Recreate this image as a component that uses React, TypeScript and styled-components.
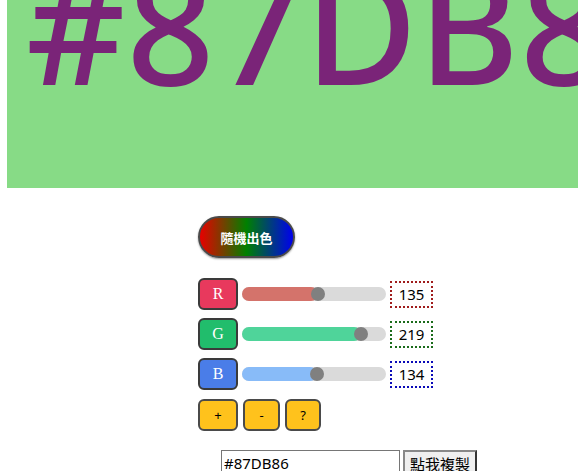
import * as React from 'react';
import styled, { createGlobalStyle } from 'styled-components';

const GlobalStyle = createGlobalStyle`
  html, body {
    margin: 0;
    padding: 0;
    background: #fff;
    overflow: hidden;
    font-family: "Noto Sans", "Noto Sans CJK TC", sans-serif;
  }
`;

interface Channel {
  key: string
  value: number
  btn: string
  fill: string
  frame: string
}

const Page = styled.div`
  padding-left: 7px;
`;

const Swatch = styled.div`
  height: 188px;
  overflow: hidden;
`;

const Hex = styled.h1`
  margin: 0;
  padding-left: 19px;
  font-family: "Noto Sans", sans-serif;
  font-weight: 500;
  font-size: 154px;
  line-height: 50px;
  letter-spacing: 1px;
  white-space: nowrap;
`;

const Panel = styled.div`
  display: flex;
  flex-direction: column;
  align-items: flex-start;
  padding: 28px 0 0 191px;
`;

const RandomButton = styled.button`
  width: 97px;
  height: 42px;
  border: 2px solid #4a4a4a;
  border-radius: 21px;
  background: linear-gradient(90deg, #e80000 0%, #008000 50%, #0000ee 100%);
  color: #fff;
  font-family: "Noto Sans CJK TC", sans-serif;
  font-weight: 700;
  font-size: 13px;
  box-shadow: 0 1px 2px rgba(0, 0, 0, .4);
  margin-bottom: 20px;
`;

const Row = styled.div`
  display: flex;
  align-items: center;
  gap: 4px;
  margin-bottom: 8px;
`;

const KeyButton = styled.button<{ $bg: string }>`
  width: 40px;
  height: 32px;
  border: 2px solid #3a3a3a;
  border-radius: 6px;
  background: ${p => p.$bg};
  color: #fff;
  font-family: "Liberation Serif", serif;
  font-size: 16px;
  padding: 0;
`;

const Track = styled.div`
  position: relative;
  width: 144px;
  height: 14px;
  border-radius: 7px;
  background: #dadada;
`;

const Fill = styled.div<{ $color: string }>`
  height: 100%;
  border-radius: 7px;
  background: ${p => p.$color};
`;

const Thumb = styled.div`
  position: absolute;
  top: 0;
  width: 14px;
  height: 14px;
  border-radius: 50%;
  background: #808080;
`;

const Value = styled.div<{ $frame: string }>`
  width: 43px;
  height: 27px;
  box-sizing: border-box;
  border: 2px dotted ${p => p.$frame};
  display: flex;
  align-items: center;
  justify-content: center;
  font-size: 15px;
  color: #000;
`;

const Tools = styled.div`
  display: flex;
  gap: 5px;
  margin-top: 1px;
  margin-bottom: 19px;
`;

const ToolButton = styled.button<{ $w: number }>`
  width: ${p => p.$w}px;
  height: 32px;
  border: 2px solid #4a4a4a;
  border-radius: 6px;
  background: #ffc21c;
  color: #000;
  font-size: 13px;
  font-family: "Noto Sans", sans-serif;
  padding: 0;
`;

const CopyRow = styled.div`
  display: flex;
  gap: 3px;
  margin-left: 23px;
`;

const HexInput = styled.input`
  width: 179px;
  height: 26px;
  box-sizing: border-box;
  border: 1px solid #767676;
  padding: 0 2px;
  font-family: "Noto Sans", sans-serif;
  font-size: 15px;
  color: #000;
`;

const CopyButton = styled.button`
  height: 26px;
  padding: 0 5px;
  border: 2px outset #888;
  background: #efefef;
  font-family: "Noto Sans CJK TC", sans-serif;
  font-size: 15px;
  color: #000;
`;

const channels: Channel[] = [
  { key: 'R', value: 135, btn: '#e8395d', fill: '#d4736b', frame: '#a01c1c' },
  { key: 'G', value: 219, btn: '#21bd6c', fill: '#4fd49a', frame: '#1a6b1a' },
  { key: 'B', value: 134, btn: '#4a7de8', fill: '#88bbf8', frame: '#0a0ab8' },
];

const toHex = (n: number) => n.toString(16).toUpperCase().padStart(2, '0');

export default function App() {
  const hex = '#' + channels.map(c => toHex(c.value)).join('');
  return (
    <Page>
      <GlobalStyle />
      <Swatch style={{ background: hex }}>
        <Hex style={{ color: '#7a2478' }}>{hex}</Hex>
      </Swatch>
      <Panel>
        <RandomButton>隨機出色</RandomButton>
        {channels.map(c => {
          const pos = (130 * c.value) / 255;
          return (
            <Row key={c.key}>
              <KeyButton $bg={c.btn}>{c.key}</KeyButton>
              <Track>
                <Fill $color={c.fill} style={{ width: pos + 7 }} />
                <Thumb style={{ left: pos }} />
              </Track>
              <Value $frame={c.frame}>{c.value}</Value>
            </Row>
          );
        })}
        <Tools>
          <ToolButton $w={40}>+</ToolButton>
          <ToolButton $w={37}>-</ToolButton>
          <ToolButton $w={36}>?</ToolButton>
        </Tools>
        <CopyRow>
          <HexInput defaultValue={hex} />
          <CopyButton>點我複製</CopyButton>
        </CopyRow>
      </Panel>
    </Page>
  );
}
